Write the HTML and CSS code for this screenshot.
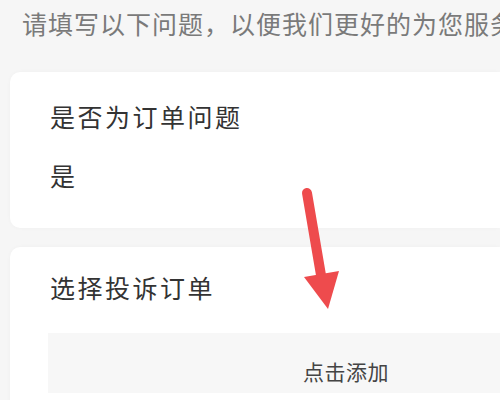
FILE: index.html
```html
<!DOCTYPE html>
<html lang="zh-CN">
<head>
  <meta charset="UTF-8">
  <meta name="viewport" content="width=device-width, initial-scale=1.0">
  <title>投诉</title>
  <link rel="stylesheet" href="styles.css">
</head>
<body>
  <div class="page">
    <div class="tip">请填写以下问题，以便我们更好的为您服务</div>

    <div class="card card-first">
      <div class="card-title">是否为订单问题</div>
      <div class="answer">是</div>
    </div>

    <div class="card card-second">
      <div class="card-title">选择投诉订单</div>
      <div class="add-box">点击添加</div>
    </div>

    <!-- red arrow drawn over the cards -->
    <svg class="arrow" width="60" height="140" viewBox="0 0 60 140">
      <path d="M12 12 L27 100" stroke="#ee4b4d" stroke-width="10" stroke-linecap="round" fill="none"/>
      <path d="M9 96 L44 90 L33 128 Z" fill="#ee4b4d"/>
    </svg>
  </div>
</body>
</html>
```

FILE: styles.css
```css
body {
  margin: 0;
  background-color: #f6f6f6;
  font-family: "Noto Sans CJK SC", "Noto Sans", sans-serif;
  overflow: hidden;
}

.page {
  position: relative;
  width: 500px;
  height: 400px;
  overflow: hidden;
}

.tip {
  width: 520px;
  height: 72px;
  box-sizing: border-box;
  padding: 8px 0 0 22px;
  font-size: 25px;
  letter-spacing: 1px;
  line-height: 30px;
  color: #7a7a7a;
  white-space: nowrap;
}

.card {
  margin-left: 10px;
  background-color: #ffffff;
  border-radius: 10px 0 0 10px;
  box-shadow: 0 0 4px rgba(0, 0, 0, 0.03);
}

.card-first {
  height: 156px;
  box-sizing: border-box;
  padding: 29px 0 0 40px;
}

.card-second {
  margin-top: 19px;
  height: 200px;
  box-sizing: border-box;
  padding-top: 25px;
}

.card-title {
  font-size: 25px;
  letter-spacing: 2.5px;
  line-height: 30px;
  color: #333333;
}

.card-second .card-title {
  padding-left: 40px;
}

.answer {
  margin-top: 29px;
  font-size: 25px;
  line-height: 30px;
  color: #333333;
}

.add-box {
  margin: 31px 0 0 38px;
  height: 60px;
  box-sizing: border-box;
  padding: 23px 0 0 255px;
  background-color: #f7f7f7;
  font-size: 21px;
  letter-spacing: 0.5px;
  line-height: 30px;
  color: #444444;
}

.arrow {
  position: absolute;
  left: 295px;
  top: 181px;
}
```
